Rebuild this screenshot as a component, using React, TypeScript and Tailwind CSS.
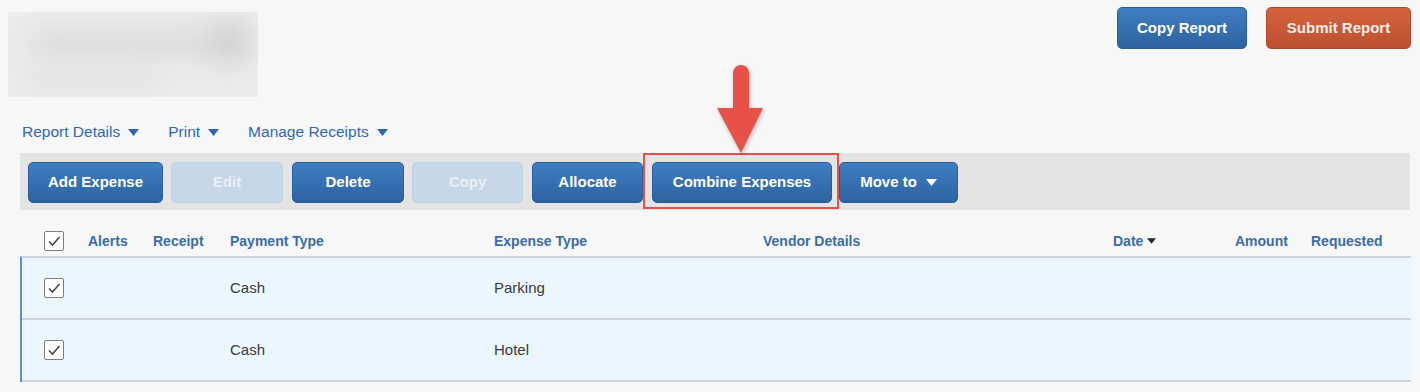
import { ReactNode } from "react"

const font = { fontFamily: '"Liberation Sans", Arial, sans-serif' }

function Caret({ className }: { className: string }) {
  return (
    <svg width="11" height="7" viewBox="0 0 11 7" className={className}>
      <path d="M0 0 L11 0 L5.5 7 Z" fill="currentColor" />
    </svg>
  )
}

function Check() {
  return (
    <div className="w-[20px] h-[20px] rounded-[2px] border-[1.5px] border-[#7d7d7d] bg-white flex items-center justify-center">
      <svg width="14" height="12" viewBox="0 0 14 12">
        <path d="M2 6.5 L5.5 10 L12.5 2" fill="none" stroke="#4a4a4a" strokeWidth="1.6" />
      </svg>
    </div>
  )
}

function Btn({ w, children, disabled }: { w: string; children: ReactNode; disabled?: boolean }) {
  if (disabled) {
    return (
      <div className={`${w} h-[41px] rounded-[5px] bg-[#c6d7e7] border border-[#bfd2e4] text-[#e9f0f7] font-bold text-[15px] flex items-center justify-center`}>
        {children}
      </div>
    )
  }
  return (
    <div className={`${w} h-[41px] rounded-[5px] bg-gradient-to-b from-[#3f7ec2] to-[#2d63a0] border border-[#2a5e98] text-white font-bold text-[15px] flex items-center justify-center gap-[9px]`}>
      {children}
    </div>
  )
}

const cols = ["w-[68px] pl-[24px]", "w-[65px]", "w-[77px]", "w-[264px]", "w-[269px]", "w-[350px]", "w-[122px]", "w-[76px]", "flex-1"]

function Row({ type }: { type: string }) {
  return (
    <div className="flex items-center h-[62px] bg-[#ebf6fe] border-b-2 border-[#cfd4d8] text-[15px] text-[#3a3a3a]">
      <div className="w-[66px] pl-[22px]"><Check /></div>
      <div className="w-[65px]" />
      <div className="w-[77px]" />
      <div className="w-[264px]">Cash</div>
      <div className="w-[269px]">{type}</div>
    </div>
  )
}

export default function App() {
  const head = ["Alerts", "Receipt", "Payment Type", "Expense Type", "Vendor Details"]
  return (
    <div style={font} className="relative w-[1420px] h-[392px] bg-[#f7f7f7] overflow-hidden">
      <div className="flex justify-between pl-[8px] pr-[9px] pt-[7px]">
        <div className="mt-[5px] w-[250px] h-[85px] bg-[#ececec] relative overflow-hidden">
          <div className="absolute left-[20px] top-[18px] w-[200px] h-[26px] rounded-full bg-[#dcdcdc] blur-md" />
          <div className="absolute left-[200px] top-[10px] w-[45px] h-[40px] rounded-full bg-[#d2d2d2] blur-md" />
          <div className="absolute left-[20px] top-[58px] w-[130px] h-[18px] rounded-full bg-[#e0e0e0] blur-md" />
        </div>
        <div className="flex gap-[19px]">
          <div className="w-[130px] h-[42px] rounded-[5px] bg-gradient-to-b from-[#3f7ec2] to-[#2d63a0] border border-[#2a5e98] text-white font-bold text-[15px] flex items-center justify-center">Copy Report</div>
          <div className="w-[145px] h-[42px] rounded-[5px] bg-gradient-to-b from-[#d3643d] to-[#bd4f30] border border-[#b44a2d] text-[#fbeee8] font-bold text-[15px] flex items-center justify-center">Submit Report</div>
        </div>
      </div>

      <div className="flex items-center pl-[22px] mt-[25px] h-[20px] text-[15.5px] text-[#2f6aad] gap-[29px]">
        <div className="flex items-center gap-[8px]">Report Details<Caret className="text-[#2d66aa]" /></div>
        <div className="flex items-center gap-[8px]">Print<Caret className="text-[#2d66aa]" /></div>
        <div className="flex items-center gap-[8px]">Manage Receipts<Caret className="text-[#2d66aa]" /></div>
      </div>

      <div className="ml-[20px] mt-[11px] w-[1390px] h-[57px] bg-[#e4e4e4] flex items-center pt-[1px]">
        <div className="ml-[8px]"><Btn w="w-[135px]">Add Expense</Btn></div>
        <div className="ml-[8px]"><Btn w="w-[112px]" disabled>Edit</Btn></div>
        <div className="ml-[9px]"><Btn w="w-[112px]">Delete</Btn></div>
        <div className="ml-[8px]"><Btn w="w-[111px]" disabled>Copy</Btn></div>
        <div className="ml-[9px]"><Btn w="w-[111px]">Allocate</Btn></div>
        <div className="ml-[9px]"><Btn w="w-[180px]">Combine Expenses</Btn></div>
        <div className="ml-[7px]"><Btn w="w-[119px]">Move to<Caret className="text-white" /></Btn></div>
      </div>

      <div className="ml-[20px] w-[1391px] h-[46px] flex items-center text-[14px] font-bold text-[#3a6da6] pt-[16px]">
        <div className={cols[0]}><Check /></div>
        {head.map((h, i) => (
          <div key={h} className={cols[i + 1]}>{h}</div>
        ))}
        <div className={`${cols[6]} flex items-center gap-[4px]`}>Date<Caret className="text-[#1f2937] w-[9px] h-[6px]" /></div>
        <div className={cols[7]}>Amount</div>
        <div className={cols[8]}>Requested</div>
      </div>

      <div className="ml-[20px] w-[1391px] border-l-2 border-l-[#5a8fc8] border-t-2 border-t-[#cfd4d8]">
        <Row type="Parking" />
        <Row type="Hotel" />
      </div>

      {/* annotation overlay */}
      <div className="absolute left-[643px] top-[153px] w-[196px] h-[56px] border-2 border-[#e5504a]" />
      <svg className="absolute left-[712px] top-[62px]" width="58" height="96" viewBox="0 0 58 96" style={{ filter: "drop-shadow(1px 2px 2px rgba(0,0,0,0.25))" }}>
        <path d="M21 11 a8 8 0 0 1 16 0 V46 H51 L29 91 L5 46 H21 Z" fill="#e8514a" />
      </svg>
    </div>
  )
}
